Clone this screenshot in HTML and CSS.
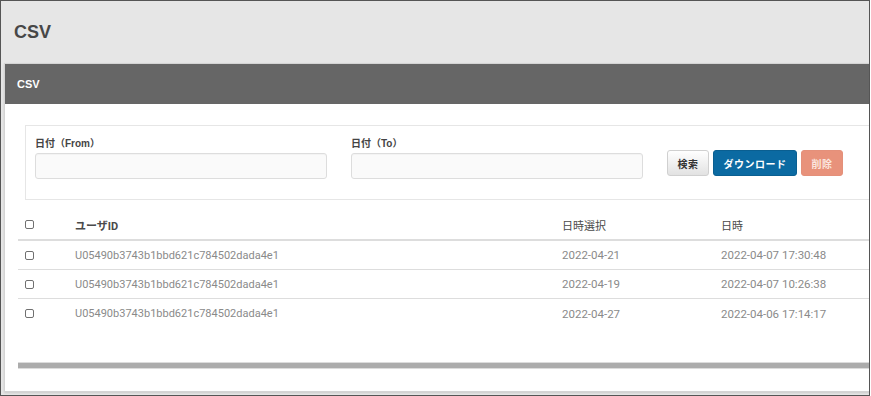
FILE: index.html
```html
<!DOCTYPE html>
<html lang="ja">
<head>
<meta charset="utf-8">
<link rel="stylesheet" href="styles.css">
</head>
<body>
<div class="frame">
  <h1 class="page-title">CSV</h1>
  <div class="panel">
    <div class="panel-head">CSV</div>
    <div class="panel-body">
      <div class="filter">
        <div class="field">
          <label class="field-label">日付（From）</label>
          <input class="field-input" type="text">
        </div>
        <div class="field">
          <label class="field-label">日付（To）</label>
          <input class="field-input" type="text">
        </div>
        <div class="buttons">
          <button class="btn btn-default">検索</button>
          <button class="btn btn-primary">ダウンロード</button>
          <button class="btn btn-danger">削除</button>
        </div>
      </div>
      <div class="table">
        <div class="row head">
          <div class="cell"><input type="checkbox" class="cb"></div>
          <div class="cell strong">ユーザID</div>
          <div class="cell">日時選択</div>
          <div class="cell">日時</div>
        </div>
        <div class="row">
          <div class="cell"><input type="checkbox" class="cb"></div>
          <div class="cell id">U05490b3743b1bbd621c784502dada4e1</div>
          <div class="cell">2022-04-21</div>
          <div class="cell">2022-04-07 17:30:48</div>
        </div>
        <div class="row">
          <div class="cell"><input type="checkbox" class="cb"></div>
          <div class="cell id">U05490b3743b1bbd621c784502dada4e1</div>
          <div class="cell">2022-04-19</div>
          <div class="cell">2022-04-07 10:26:38</div>
        </div>
        <div class="row last">
          <div class="cell"><input type="checkbox" class="cb"></div>
          <div class="cell id">U05490b3743b1bbd621c784502dada4e1</div>
          <div class="cell">2022-04-27</div>
          <div class="cell">2022-04-06 17:14:17</div>
        </div>
      </div>
      <div class="scrollbar"></div>
    </div>
  </div>
</div>
</body>
</html>
```
FILE: styles.css
```css
html, body {
  margin: 0;
  padding: 0;
  background: #ffffff;
}
.frame {
  box-sizing: border-box;
  width: 870px;
  height: 396px;
  border: 1px solid #555555;
  background: #e6e6e6;
  overflow: hidden;
  font-family: "Liberation Sans", "Noto Sans CJK JP", sans-serif;
}
.page-title {
  margin: 0;
  padding: 19px 0 0 13px;
  font-size: 18px;
  line-height: 24px;
  font-weight: bold;
  color: #474747;
  height: 44px;
  box-sizing: border-box;
}
.panel {
  margin: 18px 0 0 3px;
  width: 900px;
  height: 329px;
  box-sizing: border-box;
  border: 1px solid #d4d4d4;
  background: #ffffff;
  box-shadow: 0 1px 2px rgba(0,0,0,0.12);
}
.panel-head {
  height: 40px;
  background: #666666;
  color: #ffffff;
  font-size: 11px;
  font-weight: bold;
  line-height: 40px;
  padding-left: 12px;
}
.panel-body {
  padding: 21px 0 0 13px;
}
.filter {
  margin-left: 7px;
  border: 1px solid #e6e6e6;
  border-right: none;
  height: 75px;
  box-sizing: border-box;
  padding: 0 0 20px 9px;
  display: flex;
  align-items: flex-end;
}
.field {
  display: flex;
  flex-direction: column;
  margin-right: 24px;
}
.field-label {
  font-size: 10px;
  line-height: 14px;
  font-weight: bold;
  color: #444444;
  margin-bottom: 2px;
}
.field-input {
  box-sizing: border-box;
  width: 292px;
  height: 26px;
  margin: 0;
  border: 1px solid #dddddd;
  border-radius: 3px;
  background: #fafafa;
  box-shadow: inset 0 1px 1px rgba(0,0,0,0.03);
}
.buttons {
  display: flex;
  gap: 4px;
  margin-bottom: 3px;
}
.btn {
  box-sizing: border-box;
  height: 26px;
  margin: 0;
  padding: 0;
  border-radius: 3px;
  font-size: 10px;
  font-weight: bold;
  font-family: "Liberation Sans", "Noto Sans CJK JP", sans-serif;
  letter-spacing: 0.5px;
}
.btn-default {
  width: 42px;
  border: 1px solid #d0d0d0;
  background: linear-gradient(#ffffff, #e2e2e2);
  color: #333333;
}
.btn-primary {
  width: 84px;
  border: 1px solid #0a5f91;
  background: #0b6aa2;
  color: #ffffff;
}
.btn-danger {
  width: 42px;
  border: 1px solid #e4907a;
  background: #e8927b;
  color: #fbe6df;
}
.table {
  margin-top: 10px;
  font-family: "Roboto", "Noto Sans CJK JP", sans-serif;
}
.row {
  display: grid;
  grid-template-columns: 57px 487px 159px 1fr;
  height: 29px;
  align-items: center;
  border-bottom: 1px solid #dddddd;
  box-sizing: border-box;
  font-size: 11.5px;
  color: #8a8a8a;
}
.row.head {
  height: 31px;
  border-bottom: 2px solid #dddddd;
  color: #4a4a4a;
  font-size: 11px;
}
.row.last {
  border-bottom: none;
}
.cell {
  white-space: nowrap;
}
.cell.strong {
  font-weight: bold;
}
.cell.id {
  font-size: 11px;
}
.cell:first-child {
  padding-left: 7px;
  display: flex;
  align-items: center;
}
.cb {
  appearance: none;
  -webkit-appearance: none;
  box-sizing: border-box;
  width: 9px;
  height: 9px;
  margin: 0;
  border: 1px solid #707070;
  border-radius: 2px;
  background: #ffffff;
}
.scrollbar {
  margin-top: 34px;
  height: 7px;
  box-sizing: border-box;
  background: #acacac;
  border-top: 1px solid #dcdcdc;
  border-bottom: 1px solid #dcdcdc;
}
```
